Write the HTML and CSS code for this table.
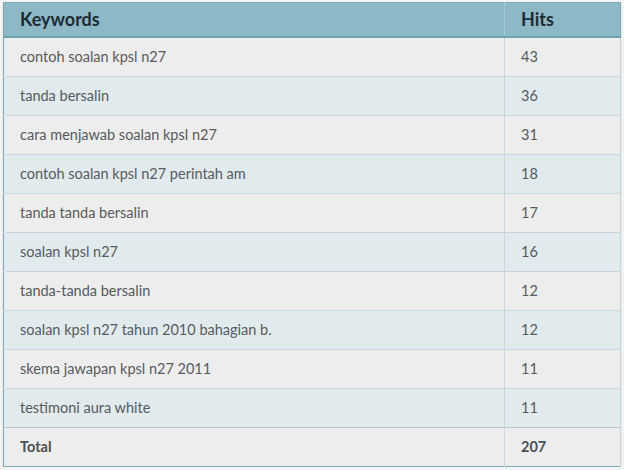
FILE: index.html
```html
<!DOCTYPE html>
<html>
<head>
<meta charset="utf-8">
<link rel="stylesheet" href="styles.css">
</head>
<body>
<div class="wrap">
<table class="kw">
<thead>
<tr><th class="c1">Keywords</th><th class="c2">Hits</th></tr>
</thead>
<tbody>
<tr><td>contoh soalan kpsl n27</td><td>43</td></tr>
<tr><td>tanda bersalin</td><td>36</td></tr>
<tr><td>cara menjawab soalan kpsl n27</td><td>31</td></tr>
<tr><td>contoh soalan kpsl n27 perintah am</td><td>18</td></tr>
<tr><td>tanda tanda bersalin</td><td>17</td></tr>
<tr><td>soalan kpsl n27</td><td>16</td></tr>
<tr><td>tanda-tanda bersalin</td><td>12</td></tr>
<tr><td>soalan kpsl n27 tahun 2010 bahagian b.</td><td>12</td></tr>
<tr><td>skema jawapan kpsl n27 2011</td><td>11</td></tr>
<tr><td>testimoni aura white</td><td>11</td></tr>
<tr class="total"><td>Total</td><td>207</td></tr>
</tbody>
</table>
</div>
</body>
</html>
```

FILE: styles.css
```css
html, body {
  margin: 0;
  padding: 0;
  background: #f3f4f4;
}
.wrap {
  padding: 2px 3px 0 3px;
}
.kw {
  width: 618px;
  border-collapse: collapse;
  border: 1px solid #7eaab8;
  font-family: Lato, "Open Sans", sans-serif;
  box-shadow: 0 2px 2px rgba(0,0,0,0.12);
}
.kw th {
  background: #8db8c6;
  color: #1d2c33;
  font-weight: 700;
  font-size: 18px;
  line-height: 20px;
  text-align: left;
  height: 32px;
  padding: 0 0 1px 16px;
  border-bottom: 2px solid #6fa3b2;
}
.kw th.c1 {
  width: 484px;
  border-right: 1px solid #a7c8d2;
}
.kw td {
  height: 37px;
  padding: 0 0 1px 16px;
  font-size: 14.5px;
  line-height: 18px;
  color: #555b5e;
  border-top: 1px solid #c9d6db;
  border-right: 1px solid #c9d6db;
}
.kw tbody tr:nth-child(odd) td {
  background: #ededed;
}
.kw tbody tr:nth-child(even) td {
  background: #e1eaed;
}
.kw tbody tr:first-child td {
  border-top: none;
}
.kw tr.total td {
  font-weight: 700;
  color: #4a5154;
  border-top: 1px solid #b9c9cf;
}
```
